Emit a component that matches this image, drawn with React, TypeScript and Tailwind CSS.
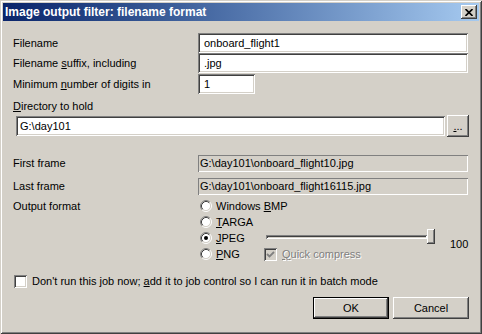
import React from 'react';

const sunken =
  'bg-white shadow-[inset_1px_1px_#808080,inset_-1px_-1px_#ffffff,inset_2px_2px_#404040,inset_-2px_-2px_#d4d0c8]';
const raised =
  'bg-[#d4d0c8] shadow-[inset_-1px_-1px_#404040,inset_1px_1px_#ffffff,inset_-2px_-2px_#808080,inset_2px_2px_#d4d0c8]';
const flat =
  'bg-[#d4d0c8] shadow-[inset_1px_1px_#808080,inset_-1px_-1px_#ffffff]';

function Radio({ checked = false }: { checked?: boolean }) {
  return (
    <svg width="12" height="12" viewBox="0 0 12 12" className="shrink-0">
      <circle cx="6" cy="6" r="4.5" fill="#ffffff" />
      <path d="M2.11 9.89 A5.5 5.5 0 0 1 9.89 2.11" fill="none" stroke="#808080" strokeWidth="1" />
      <path d="M9.89 2.11 A5.5 5.5 0 0 1 2.11 9.89" fill="none" stroke="#ffffff" strokeWidth="1" />
      <path d="M2.82 9.18 A4.5 4.5 0 0 1 9.18 2.82" fill="none" stroke="#404040" strokeWidth="1" />
      <path d="M9.18 2.82 A4.5 4.5 0 0 1 2.82 9.18" fill="none" stroke="#d4d0c8" strokeWidth="1" />
      {checked && <circle cx="6" cy="6" r="2" fill="#000000" />}
    </svg>
  );
}

function Check({ checked = false, disabled = false }: { checked?: boolean; disabled?: boolean }) {
  return (
    <div
      className={`w-[13px] h-[13px] shrink-0 flex items-center justify-center shadow-[inset_1px_1px_#808080,inset_-1px_-1px_#ffffff,inset_2px_2px_#404040,inset_-2px_-2px_#d4d0c8] ${
        disabled ? 'bg-[#d4d0c8]' : 'bg-white'
      }`}
    >
      {checked && (
        <svg width="9" height="9" viewBox="0 0 9 9">
          <path d="M1 4 L3.5 6.5 L8 2" fill="none" stroke={disabled ? '#808080' : '#000000'} strokeWidth="1.8" />
        </svg>
      )}
    </div>
  );
}

function Label({ children }: { children: React.ReactNode }) {
  return <div className="w-[185px] shrink-0 whitespace-nowrap">{children}</div>;
}

export default function App() {
  return (
    <div className="w-[482px] h-[334px] bg-[#d4d0c8] p-[3px] flex flex-col text-[11px] leading-[13px] text-black [font-family:'Liberation_Sans',Arial,sans-serif] shadow-[inset_1px_1px_#d4d0c8,inset_-1px_-1px_#404040,inset_2px_2px_#ffffff,inset_-2px_-2px_#808080]">
      {/* Title bar */}
      <div className="h-[18px] flex items-center justify-between bg-linear-to-r from-[#0a246a] to-[#a6caf0] pl-[2px] pr-[2px]">
        <span className="text-white font-bold text-[12px]">Image output filter: filename format</span>
        <div className={`w-[16px] h-[14px] flex items-center justify-center ${raised}`}>
          <svg width="8" height="7" viewBox="0 0 8 7">
            <path d="M0.5 0 L7.5 7 M7.5 0 L0.5 7" stroke="#000000" strokeWidth="1.6" />
          </svg>
        </div>
      </div>

      <div className="flex flex-col px-[10px]">
        {/* Filename fields */}
        <div className="mt-[12px] flex items-center h-[20px]">
          <Label>Filename</Label>
          <div className={`w-[270px] h-[20px] flex items-center pl-[6px] ${sunken}`}>onboard_flight1</div>
        </div>
        <div className="flex items-center h-[20px]">
          <Label>
            Filename <u>s</u>uffix, including
          </Label>
          <div className={`w-[270px] h-[20px] flex items-center pl-[6px] ${sunken}`}>.jpg</div>
        </div>
        <div className="mt-[1px] flex items-center h-[20px]">
          <Label>
            Minimum <u>n</u>umber of digits in
          </Label>
          <div className={`w-[57px] h-[20px] flex items-center pl-[6px] ${sunken}`}>1</div>
        </div>

        {/* Directory */}
        <div className="mt-[6px] h-[13px]">
          <u>D</u>irectory to hold
        </div>
        <div className="mt-[2px] h-[22px] flex items-center pl-[3px] gap-[2px]">
          <div className={`w-[429px] h-[20px] flex items-center pl-[4px] ${sunken}`}>G:\day101</div>
          <div className={`w-[22px] h-[22px] flex items-center justify-center ${raised}`}>
            <span className="leading-none">
              <u>.</u>..
            </span>
          </div>
        </div>

        {/* Frames */}
        <div className="mt-[18px] flex items-center h-[17px]">
          <Label>First frame</Label>
          <div className={`w-[270px] h-[17px] flex items-center pl-[2px] ${flat}`}>G:\day101\onboard_flight10.jpg</div>
        </div>
        <div className="mt-[6px] flex items-center h-[17px]">
          <Label>Last frame</Label>
          <div className={`w-[270px] h-[17px] flex items-center pl-[2px] ${flat}`}>G:\day101\onboard_flight16115.jpg</div>
        </div>

        {/* Output format */}
        <div className="mt-[3px] flex">
          <div className="w-[185px] shrink-0 h-[16px] flex items-center">Output format</div>
          <div className="flex flex-col">
            <div className="h-[16px] flex items-center pl-[2px]">
              <Radio />
              <span className="ml-[4px]">
                Windows <u>B</u>MP
              </span>
            </div>
            <div className="h-[16px] flex items-center pl-[2px]">
              <Radio />
              <span className="ml-[4px]">
                <u>T</u>ARGA
              </span>
            </div>
            <div className="h-[16px] flex items-center">
              <div className="w-[66px] flex items-center pl-[2px]">
                <Radio checked />
                <span className="ml-[4px]">
                  <u>J</u>PEG
                </span>
              </div>
              <div className="ml-[2px] mb-[3px] flex items-center">
                <div className="w-[161px] h-[4px] shadow-[inset_1px_1px_#808080,inset_-1px_-1px_#ffffff,inset_2px_2px_#404040,inset_-2px_-2px_#d4d0c8]" />
                <div className={`w-[8px] h-[15px] ${raised}`} />
              </div>
              <span className="ml-[15px] mt-[12px]">100</span>
            </div>
            <div className="h-[16px] flex items-center">
              <div className="w-[66px] flex items-center pl-[2px]">
                <Radio />
                <span className="ml-[4px]">
                  <u>P</u>NG
                </span>
              </div>
              <Check checked disabled />
              <span className="ml-[5px] text-[#808080] [text-shadow:1px_1px_0_#ffffff]">
                <u>Q</u>uick compress
              </span>
            </div>
          </div>
        </div>

        {/* Batch */}
        <div className="mt-[13px] h-[13px] flex items-center pl-[1px]">
          <Check />
          <span className="ml-[5px] whitespace-nowrap">
            Don't run this job now; <u>a</u>dd it to job control so I can run it in batch mode
          </span>
        </div>

        {/* Buttons */}
        <div className="mt-[9px] flex justify-end gap-[4px]">
          <div className="w-[76px] h-[22px] border border-black bg-[#d4d0c8] shadow-[inset_-1px_-1px_#404040,inset_1px_1px_#ffffff,inset_-2px_-2px_#808080] flex items-center justify-center">
            OK
          </div>
          <div className={`w-[76px] h-[22px] flex items-center justify-center ${raised}`}>Cancel</div>
        </div>
      </div>
    </div>
  );
}
